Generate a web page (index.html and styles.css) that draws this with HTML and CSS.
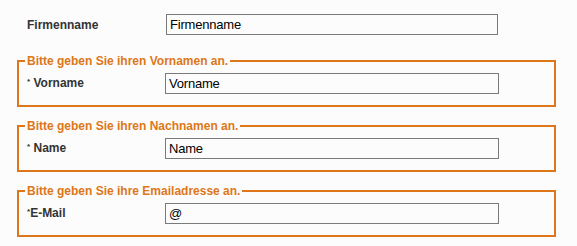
FILE: index.html
```html
<!DOCTYPE html>
<html lang="de">
<head>
<meta charset="utf-8">
<title>Formular</title>
<link rel="stylesheet" href="styles.css">
</head>
<body>
<form class="form">
  <div class="row row-top">
    <label class="label" for="firma">Firmenname</label>
    <input class="field field-top" id="firma" type="text" value="Firmenname">
  </div>
  <fieldset class="group">
    <legend class="legend">Bitte geben Sie ihren Vornamen an.</legend>
    <div class="row">
      <label class="label" for="vorname"><span class="star">*</span> Vorname</label>
      <input class="field" id="vorname" type="text" value="Vorname">
    </div>
  </fieldset>
  <fieldset class="group">
    <legend class="legend">Bitte geben Sie ihren Nachnamen an.</legend>
    <div class="row">
      <label class="label" for="name"><span class="star">*</span> Name</label>
      <input class="field" id="name" type="text" value="Name">
    </div>
  </fieldset>
  <fieldset class="group">
    <legend class="legend">Bitte geben Sie ihre Emailadresse an.</legend>
    <div class="row">
      <label class="label" for="mail"><span class="star">*</span>E-Mail</label>
      <input class="field" id="mail" type="text" value="@">
    </div>
  </fieldset>
</form>
</body>
</html>
```
FILE: styles.css
```css
html, body {
  margin: 0;
  padding: 0;
  background: #fcfcfc;
}
body {
  font-family: "Liberation Sans", Arial, sans-serif;
  color: #333333;
}
.form {
  display: flex;
  flex-direction: column;
  padding-top: 14px;
}
.row {
  display: flex;
  align-items: center;
}
.row-top {
  padding-left: 27px;
}
.row-top .label {
  width: 139px;
}
.label {
  width: 138px;
  font-size: 12px;
  line-height: 14px;
  margin-top: -3px;
  font-weight: bold;
  color: #333333;
}
.row-top .label {
  margin-top: 0;
}
.star {
  font-size: 8px;
  vertical-align: 3px;
}
.field {
  box-sizing: border-box;
  width: 334px;
  height: 21px;
  margin: 0;
  padding: 0 3px;
  border: 1px solid #7a7a7a;
  background: #fcfcfc;
  font-family: "Liberation Sans", Tahoma, sans-serif;
  font-size: 13px;
  letter-spacing: -0.2px;
  color: #000000;
  outline: none;
}
.field-top {
  width: 332px;
}
.group {
  box-sizing: border-box;
  width: 539px;
  height: 53px;
  margin: 19px 0 0 17px;
  padding: 5px 0 0 8px;
  border: 2px solid #dd7719;
  min-width: 0;
}
.group + .group {
  margin-top: 12px;
}
.legend {
  margin-left: -2px;
  padding: 0 2px;
  font-size: 12px;
  line-height: 14px;
  font-weight: bold;
  color: #dd7719;
}
```
